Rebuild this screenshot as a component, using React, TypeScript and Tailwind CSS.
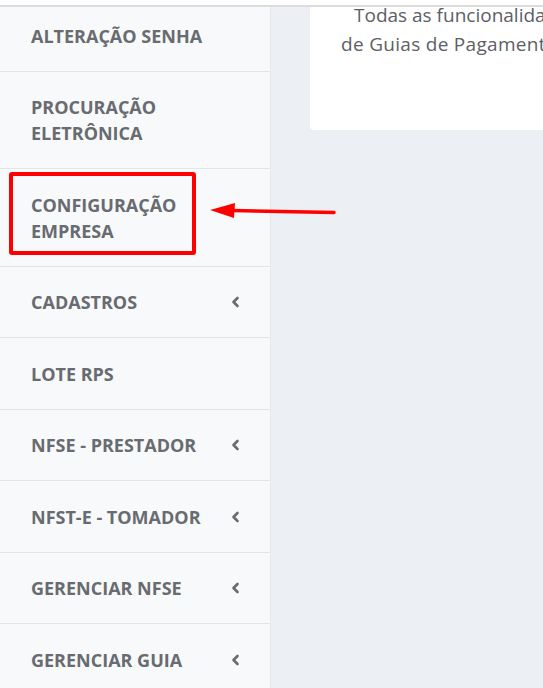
const items = [
  { label: ['ALTERAÇÃO SENHA'], sub: false },
  { label: ['PROCURAÇÃO', 'ELETRÔNICA'], sub: false },
  { label: ['CONFIGURAÇÃO', 'EMPRESA'], sub: false },
  { label: ['CADASTROS'], sub: true },
  { label: ['LOTE RPS'], sub: false },
  { label: ['NFSE - PRESTADOR'], sub: true },
  { label: ['NFST-E - TOMADOR'], sub: true },
  { label: ['GERENCIAR NFSE'], sub: true },
  { label: ['GERENCIAR GUIA'], sub: true },
]

function AngleLeft() {
  return (
    <svg width="9" height="12" viewBox="0 0 9 12" className="text-[#686b6f]">
      <path d="M6.5 2 L2.5 6 L6.5 10" fill="none" stroke="currentColor" strokeWidth="2.6" strokeLinecap="round" strokeLinejoin="round" />
    </svg>
  )
}

export default function App() {
  return (
    <div className="relative w-[543px] h-[688px] overflow-hidden bg-white font-['Open_Sans',sans-serif]">
      {/* faixa superior */}
      <div className="h-[5px] bg-white" />
      <div className="h-[2px] bg-[#dcdcdc]" />

      <div className="flex h-[681px]">
        {/* menu lateral */}
        <nav className="w-[271px] shrink-0 bg-[#f8f9fb] border-r border-[#e6e8eb]">
          {items.map((item, i) => (
            <div
              key={i}
              className={
                'flex items-center justify-between pl-[31px] pr-[30px] pb-[22px] border-b border-[#e3e5e8] ' +
                (i === 0 ? 'pt-[15.5px]' : 'pt-[22.5px]')
              }
            >
              <span className="text-[18px] leading-[26px] font-bold text-[#686b6f]">
                {item.label.map((l, j) => (
                  <span key={j} className="block">
                    {l}
                  </span>
                ))}
              </span>
              {item.sub && <AngleLeft />}
            </div>
          ))}
        </nav>

        {/* conteúdo */}
        <main className="flex-1 bg-[#eceff4] pl-[39px]">
          <div className="w-[480px] h-[123px] bg-white rounded-b-[4px] pl-[31px] overflow-hidden">
            <p className="-mt-[6px] text-[19px] leading-[29px] text-[#5c6066] whitespace-nowrap">
              <span className="block pl-[13px]">Todas as funcionalidades do sistema</span>
              <span className="block tracking-[0.3px]">de Guias de Pagamento estão disponíveis</span>
            </p>
          </div>
        </main>
      </div>

      {/* destaque */}
      <div className="absolute left-[9px] top-[172px] w-[187px] h-[83px] border-[4px] border-[#ff0000] rounded-[3px]" />
      <svg className="absolute left-[205px] top-[200px]" width="135" height="24" viewBox="0 0 135 24">
        <line x1="27" y1="10.5" x2="129" y2="12.5" stroke="#ff0000" strokeWidth="3.5" strokeLinecap="round" />
        <polygon points="5,10 30,3 29,18" fill="#ff0000" />
      </svg>
    </div>
  )
}
